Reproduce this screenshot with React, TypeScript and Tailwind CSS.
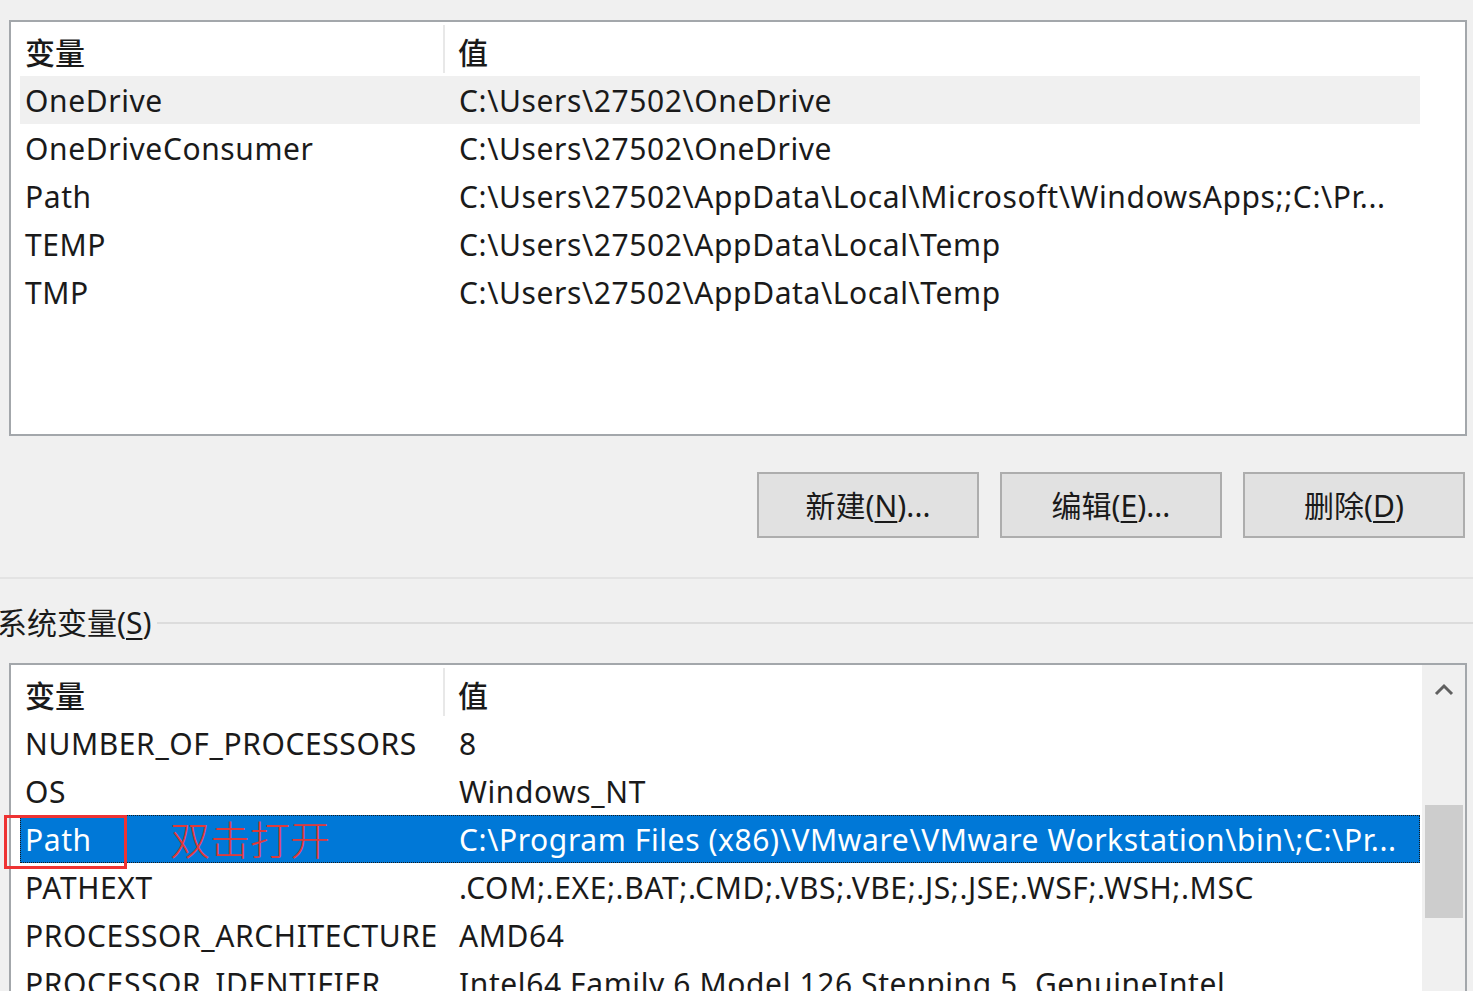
import React from "react";

const font = { fontFamily: "'Noto Sans', 'Noto Sans CJK SC', sans-serif" };

type Row = [string, string];

const userRows: Row[] = [
  ["OneDrive", "C:\\Users\\27502\\OneDrive"],
  ["OneDriveConsumer", "C:\\Users\\27502\\OneDrive"],
  ["Path", "C:\\Users\\27502\\AppData\\Local\\Microsoft\\WindowsApps;;C:\\Pr..."],
  ["TEMP", "C:\\Users\\27502\\AppData\\Local\\Temp"],
  ["TMP", "C:\\Users\\27502\\AppData\\Local\\Temp"],
];

const sysRows: Row[] = [
  ["NUMBER_OF_PROCESSORS", "8"],
  ["OS", "Windows_NT"],
  ["Path", "C:\\Program Files (x86)\\VMware\\VMware Workstation\\bin\\;C:\\Pr..."],
  ["PATHEXT", ".COM;.EXE;.BAT;.CMD;.VBS;.VBE;.JS;.JSE;.WSF;.WSH;.MSC"],
  ["PROCESSOR_ARCHITECTURE", "AMD64"],
  ["PROCESSOR_IDENTIFIER", "Intel64 Family 6 Model 126 Stepping 5, GenuineIntel"],
];

function Header() {
  return (
    <div className="flex h-[54px] w-[1400px] items-center bg-white pt-[6px] text-[30px] font-medium text-[#1a1a1a]">
      <div className="flex h-full w-[425px] items-center border-r-2 border-[#e8e8e8] pl-[5px] mt-[-6px] pt-[6px]">变量</div>
      <div className="pl-[13px]">值</div>
    </div>
  );
}

function ListRow({ row, variant }: { row: Row; variant?: "hover" | "selected" }) {
  const bg =
    variant === "hover"
      ? "bg-[#f0f0f0] text-[#1a1a1a]"
      : variant === "selected"
      ? "bg-[#0078d7] text-white outline-1 outline-dotted outline-[#1a1a1a] -outline-offset-1"
      : "text-[#1a1a1a]";
  return (
    <div className={`flex h-[48px] w-[1400px] items-center whitespace-nowrap text-[30px] tracking-[0.6px] ${bg}`}>
      <div className="w-[427px] pl-[5px]">{row[0]}</div>
      <div className="pl-[12px]">{row[1]}</div>
    </div>
  );
}

function Button({ label, hot, rest }: { label: string; hot: string; rest: string }) {
  return (
    <div className="flex h-[66px] w-[222px] items-center justify-center border-2 border-[#adadad] bg-[#e1e1e1] text-[30px] text-[#1a1a1a]">
      {label}(<span className="underline underline-offset-4 decoration-2">{hot}</span>){rest}
    </div>
  );
}

export default function App() {
  return (
    <div className="h-[991px] w-[1473px] overflow-hidden bg-[#f0f0f0]" style={font}>
      <div className="pl-[9px] pr-[6px] pt-[20px]">
        <div className="h-[416px] border-2 border-[#a3a7ab] bg-white pl-[9px]">
          <Header />
          {userRows.map((r, i) => (
            <ListRow key={i} row={r} variant={i === 0 ? "hover" : undefined} />
          ))}
        </div>
      </div>

      <div className="mt-[36px] flex justify-end gap-[21px] pr-[8px]">
        <Button label="新建" hot="N" rest="..." />
        <Button label="编辑" hot="E" rest="..." />
        <Button label="删除" hot="D" rest="" />
      </div>

      <div className="mt-[39px] h-[2px] bg-[#e3e3e3]" />

      <div className="mt-[24px] flex items-center">
        <div className="ml-[-3px] text-[30px] leading-[40px] text-[#1a1a1a]">
          系统变量(<span className="underline underline-offset-4 decoration-2">S</span>)
        </div>
        <div className="ml-[6px] h-[2px] flex-1 bg-[#dcdcdc]" />
      </div>

      <div className="ml-[9px] mr-[6px] mt-[20px] flex h-[400px] border-2 border-b-0 border-[#a3a7ab] bg-white">
        <div className="relative flex-1 pl-[9px]">
          <Header />
          {sysRows.map((r, i) => (
            <ListRow key={i} row={r} variant={i === 2 ? "selected" : undefined} />
          ))}
          <div className="pointer-events-none absolute left-[-7px] top-[150px] h-[54px] w-[123px] border-[3px] border-[#ee3333]" />
          <div className="pointer-events-none absolute left-[159px] top-[148px] text-[40px] leading-[50px] text-[#e03a3a]" style={{ fontFamily: "'Noto Sans CJK SC', sans-serif", fontWeight: 300 }}>
            双击打开
          </div>
        </div>
        <div className="flex w-[43px] flex-col items-center bg-[#f0f0f0]">
          <div className="flex h-[50px] items-center justify-center">
            <svg width="20" height="14" viewBox="0 0 20 14">
              <path d="M2 11 L10 3 L18 11" fill="none" stroke="#606060" strokeWidth="3" />
            </svg>
          </div>
          <div className="mt-[90px] h-[113px] w-[38px] bg-[#cdcdcd]" />
        </div>
      </div>
    </div>
  );
}
